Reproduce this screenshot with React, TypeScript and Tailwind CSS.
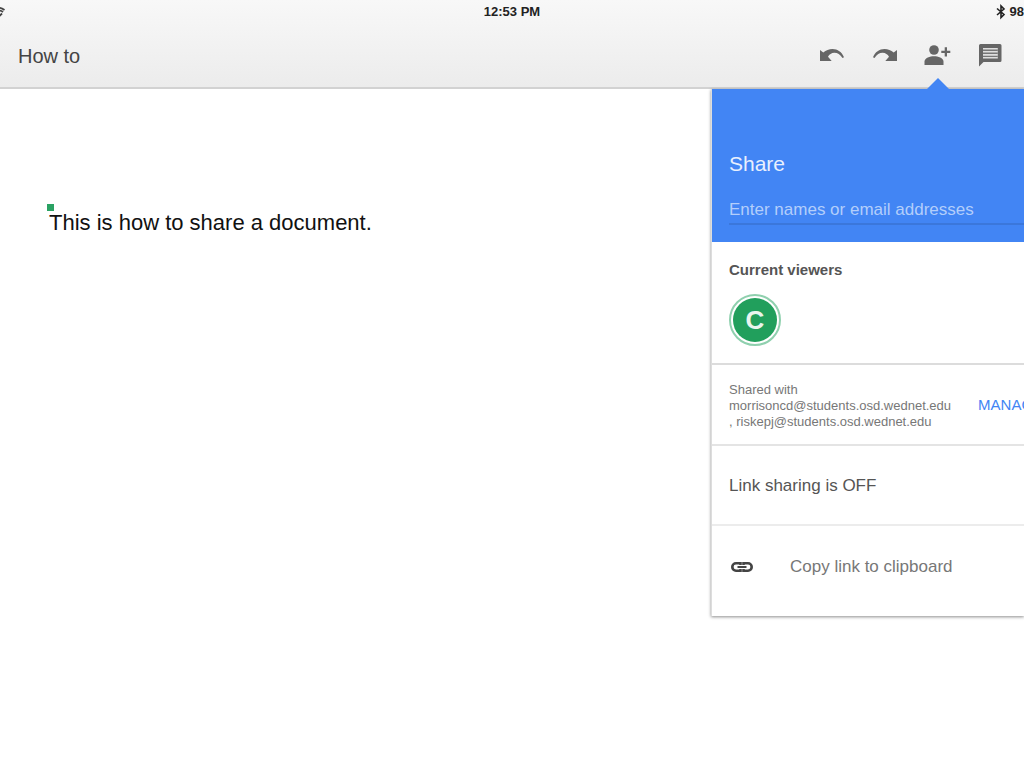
import type {FC, ReactNode} from "react";

interface IToolButtonProps {
    label: string;
    children: ReactNode;
}

const ToolButton: FC<IToolButtonProps> = ({label, children}) => {
    return <button type="button" aria-label={label} className="flex h-7 w-7 shrink-0 items-center justify-center text-[#666]">
        {children}
    </button>;
};

const WifiIcon: FC = () => <svg viewBox="0 0 6 12" className="h-3 w-[6px]" fill="none" stroke="#444" strokeWidth="1.8">
    <path d="M-4 2.500Q0 .5 4.500 4"/>
    <path d="M-3 5.500Q0 3.500 3 6"/>
    <path d="M-2 7L0 9.500L2 7.500"/>
</svg>;

const BluetoothIcon: FC = () => <svg viewBox="0 0 10 16" className="h-4 w-[10px]" fill="none" stroke="#222" strokeWidth="1.6">
    <path d="M1 4.500L8 10.500L5 13.500V2L8 5L1 11"/>
</svg>;

const UndoIcon: FC = () => <svg viewBox="0 0 28 28" className="h-7 w-7" fill="currentColor">
    <path d="M3 8L6.300 10.600C9 8.200 12 7 15.500 7C20.500 7 25 10 27 15.300L25.500 16C23.300 12.600 20.500 10.800 17.300 10.800C14.500 10.800 12.300 12.500 11 14.700L14.700 19H3Z"/>
</svg>;

const RedoIcon: FC = () => <svg viewBox="0 0 28 28" className="h-7 w-7" fill="currentColor">
    <path d="M27 8L23.700 10.600C21 8.200 18 7 14.500 7C9.500 7 5 10 3 15.300L4.500 16C6.700 12.600 9.500 10.800 12.700 10.800C15.500 10.800 17.700 12.500 19 14.700L15.300 19H27Z"/>
</svg>;

const PersonAddIcon: FC = () => <svg viewBox="0 0 28 28" className="h-7 w-7" fill="currentColor">
    <circle cx="11" cy="8" r="4.800"/>
    <path d="M1.500 23V19.500C1.500 16 7 14.300 11 14.300S20.500 16 20.500 19.500V23Z"/>
    <path d="M21.700 5.300H24V8.800H27.300V11H24V14.500H21.700V11H18.300V8.800H21.700Z"/>
</svg>;

const CommentIcon: FC = () => <svg viewBox="0 0 28 28" className="h-7 w-7">
    <path fill="currentColor" d="M4.500 2H24Q25.500 2 25.500 3.500V18.500Q25.500 20 24 20H7.500L3 24.500V3.500Q3 2 4.500 2Z"/>
    <path fill="#dedede" d="M7 6H21.800V16.500H7Z"/>
    <path stroke="#777" strokeWidth="1.400" d="M7 8.200H21.800M7 11.300H21.800M7 14.400H21.800"/>
</svg>;

const LinkIcon: FC = () => <svg viewBox="0 0 24 12" className="h-3 w-6" fill="none" stroke="#444" strokeWidth="2.600">
    <path d="M10.500 4V2.300H6A3.700 3.700 0 0 0 6 9.700H10.500V8M13.500 4V2.300H18A3.700 3.700 0 0 1 18 9.700H13.500V8"/>
    <path strokeWidth="2" d="M7.500 6H16.500"/>
</svg>;

const Header: FC = () => {
    return <header className="border-b-2 border-[#d2d2d2] bg-linear-to-b from-[#f8f8f8] to-[#ececec]">
        <div className="grid h-6 grid-cols-3 items-center text-[13px] font-bold text-[#222]">
            <WifiIcon/>
            <span className="text-center">12:53 PM</span>
            <div className="flex items-center justify-end gap-1">
                <BluetoothIcon/>
                <span>98</span>
            </div>
        </div>
        <div className="flex h-[63px] items-center justify-between pr-5 pl-[18px]">
            <h1 className="text-[20px] text-[#444]">How to</h1>
            <div className="flex items-center gap-[25px]">
                <ToolButton label="Undo"><UndoIcon/></ToolButton>
                <ToolButton label="Redo"><RedoIcon/></ToolButton>
                <ToolButton label="Add people"><PersonAddIcon/></ToolButton>
                <ToolButton label="Comments"><CommentIcon/></ToolButton>
            </div>
        </div>
    </header>;
};

const SharePanel: FC = () => {
    return <aside className="relative w-[313px] shrink-0 self-start border-l border-[#ddd] bg-white shadow-[0_1px_3px_rgba(0,0,0,0.45)]">
        <svg viewBox="0 0 24 12" className="absolute -top-[11px] right-[74px] h-3 w-6" fill="#4285f4">
            <path d="M0 12L12 0L24 12Z"/>
        </svg>
        <div className="bg-[#4285f4] pt-[59px] pb-[17px] pl-[17px]">
            <h2 className="text-[21px] leading-8 text-[#e8f0fe]">Share</h2>
            <input type="text" aria-label="Enter names or email addresses" placeholder="Enter names or email addresses"
                className="mt-4 block h-[29px] w-full border-b-2 border-[#3b77db] text-[17px] text-white outline-none placeholder:text-[#b3cefb]"/>
        </div>
        <section className="h-[123px] border-b-2 border-[#dcdcdc] px-[17px] pt-[18px]">
            <h3 className="text-[15px] leading-5 font-bold text-[#555]">Current viewers</h3>
            <div className="mt-[14px] flex h-[52px] w-[52px] items-center justify-center rounded-full border-2 border-[#8fd0ae]">
                <span className="flex h-11 w-11 items-center justify-center rounded-full bg-[#219f5c] text-[26px] font-bold text-[#e9f5ee]">C</span>
            </div>
        </section>
        <section className="flex h-[81px] items-center gap-[27px] overflow-hidden border-b-2 border-[#e4e4e4] pt-[2px] pl-[17px]">
            <p className="shrink-0 text-[13px] leading-4 text-[#777]">
                Shared with<br/>morrisoncd@students.osd.wednet.edu<br/>, riskepj@students.osd.wednet.edu
            </p>
            <button type="button" className="shrink-0 text-[15px] text-[#4285f4]">MANAGE</button>
        </section>
        <section className="flex h-20 items-center border-b-2 border-[#ececec] pt-[2px] pl-[17px] text-[17px] text-[#555]">
            Link sharing is OFF
        </section>
        <button type="button" className="flex h-[90px] w-full items-center gap-9 pb-2 pl-[18px] text-[17px] text-[#777]">
            <LinkIcon/>
            <span>Copy link to clipboard</span>
        </button>
    </aside>;
};

export default function App() {
    return <div className="flex min-h-screen flex-col overflow-x-hidden bg-white font-['Liberation_Sans',Arial,sans-serif]">
        <Header/>
        <div className="flex flex-1">
            <main className="min-w-0 flex-1 pt-[115px] pl-[47px]">
                <div className="h-[7px] w-[7px] bg-[#2aa263]"/>
                <p className="pl-[2px] text-[22px] leading-6 text-[#111]">This is how to share a document.</p>
            </main>
            <SharePanel/>
        </div>
    </div>;
}
